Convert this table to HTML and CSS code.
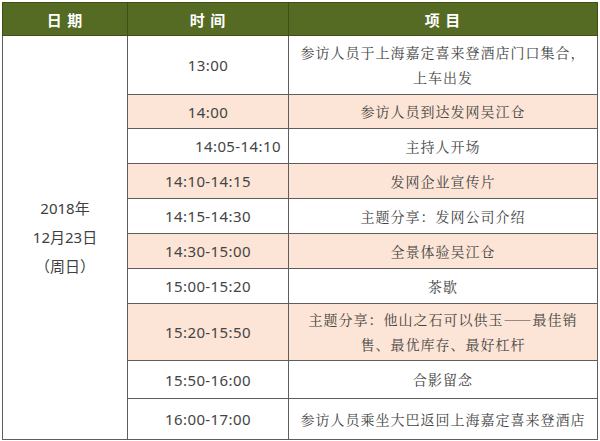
FILE: index.html
```html
<!DOCTYPE html>
<html lang="zh-CN">
<head>
<meta charset="utf-8">
<link rel="stylesheet" href="styles.css">
</head>
<body>
<div class="wrap">
<table class="sched">
  <colgroup>
    <col class="c-date">
    <col class="c-time">
    <col class="c-item">
  </colgroup>
  <thead>
    <tr class="h-head">
      <th>日 期</th>
      <th>时 间</th>
      <th>项 目</th>
    </tr>
  </thead>
  <tbody>
    <tr class="h59">
      <td class="date" rowspan="10">2018年<br>12月23日<br>（周日）</td>
      <td class="time">13:00</td>
      <td class="item">参访人员于上海嘉定喜来登酒店门口集合，<br>上车出发</td>
    </tr>
    <tr class="h34 alt">
      <td class="time">14:00</td>
      <td class="item">参访人员到达发网吴江仓</td>
    </tr>
    <tr class="h35">
      <td class="time shift">14:05-14:10</td>
      <td class="item">主持人开场</td>
    </tr>
    <tr class="h35 alt">
      <td class="time">14:10-14:15</td>
      <td class="item">发网企业宣传片</td>
    </tr>
    <tr class="h35">
      <td class="time">14:15-14:30</td>
      <td class="item">主题分享：发网公司介绍</td>
    </tr>
    <tr class="h35 alt">
      <td class="time">14:30-15:00</td>
      <td class="item">全景体验吴江仓</td>
    </tr>
    <tr class="h35">
      <td class="time">15:00-15:20</td>
      <td class="item">茶歇</td>
    </tr>
    <tr class="h57 alt">
      <td class="time">15:20-15:50</td>
      <td class="item">主题分享：他山之石可以供玉——最佳销<br>售、最优库存、最好杠杆</td>
    </tr>
    <tr class="h38">
      <td class="time">15:50-16:00</td>
      <td class="item">合影留念</td>
    </tr>
    <tr class="h41">
      <td class="time">16:00-17:00</td>
      <td class="item">参访人员乘坐大巴返回上海嘉定喜来登酒店</td>
    </tr>
  </tbody>
</table>
</div>
</body>
</html>
```

FILE: styles.css
```css
html, body {
  margin: 0;
  padding: 0;
  background: #ffffff;
}

.wrap {
  padding: 2px 0 0 2px;
}

.sched {
  border-collapse: collapse;
  table-layout: fixed;
  width: 595px;
  font-family: "Noto Sans", "Noto Sans CJK SC", sans-serif;
  color: #3b3b3b;
}

.c-date { width: 125px; }
.c-time { width: 161px; }
.c-item { width: 309px; }

.sched th,
.sched td {
  border: 1px solid #5e5e5e;
  padding: 0;
  text-align: center;
  vertical-align: middle;
}

.sched th {
  background: #556a22;
  color: #ffffff;
  font-family: "Noto Sans CJK SC", sans-serif;
  font-weight: 700;
  font-size: 15px;
  letter-spacing: 1px;
  border-color: #3f4f17;
}

.h-head { height: 33px; }
.h59 { height: 59px; }
.h34 { height: 34px; }
.h35 { height: 35px; }
.h57 { height: 57px; }
.h38 { height: 38px; }
.h41 { height: 41px; }

.alt .time,
.alt .item {
  background: #fce4d6;
}

.date {
  background: #ffffff;
  font-size: 15px;
  line-height: 29px;
  color: #404040;
}

.time {
  font-size: 15px;
  letter-spacing: 0.4px;
  color: #444444;
}

.sched .shift {
  padding-left: 67px;
  text-align: left;
}

.item {
  font-family: "Noto Serif CJK SC", "AR PL UMing CN", "Noto Sans CJK SC", serif;
  font-size: 14px;
  letter-spacing: 1px;
  line-height: 25px;
  color: #444444;
}
```
